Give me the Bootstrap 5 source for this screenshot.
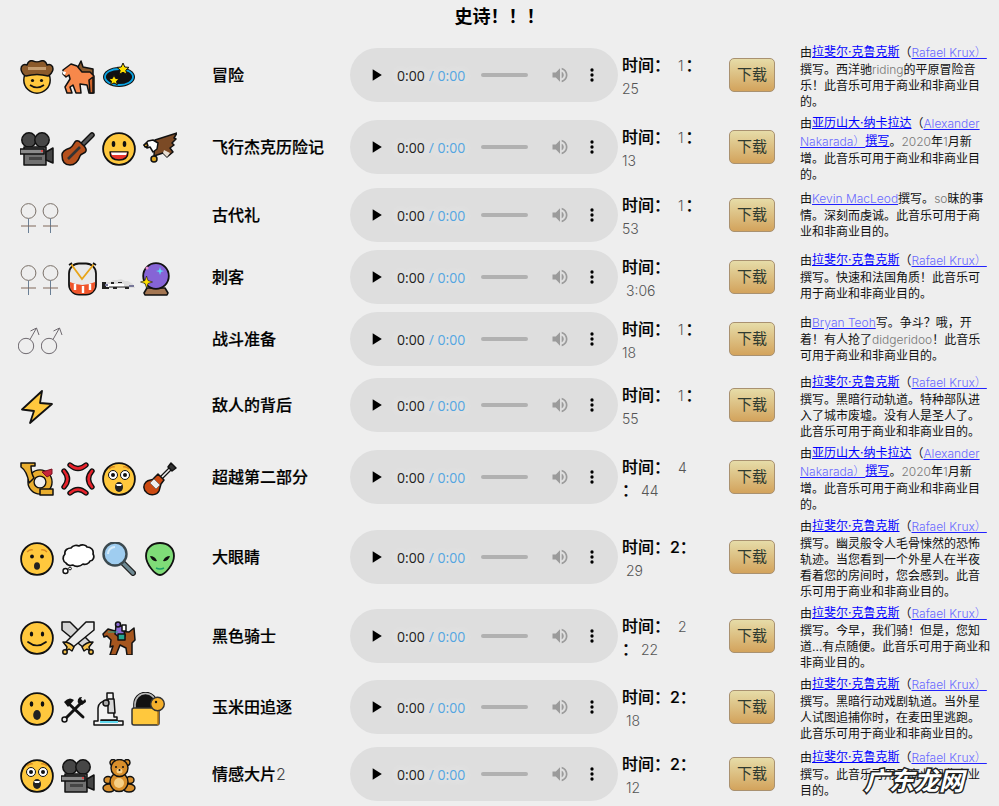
<!DOCTYPE html>
<html lang="zh-CN">
<head>
  <meta charset="UTF-8">
  <meta name="viewport" content="width=device-width, initial-scale=1.0">
  <title>史诗</title>
  <link href="https://cdn.jsdelivr.net/npm/bootstrap@5.3.2/dist/css/bootstrap.min.css" rel="stylesheet">
  <style>
    body { background: #eee; color: #000; font-family: Inter, "Noto Sans CJK SC", sans-serif; overflow: hidden; position: relative; height: 806px; }
    .sheet-title { font-size: 18px; font-weight: 700; line-height: 24px; padding-top: 5px; height: 40px; margin: 0; text-align: center; }
    .track { min-height: 62px; padding-left: 20px; }
    .track.h64 { min-height: 64px; }
    .track.h72 { min-height: 72px; }
    .track.h74 { min-height: 74px; }
    .emo-col { flex: 0 0 192px; height: 34px; margin-top: 3px; }
    .emo { width: 34px; height: 34px; margin-right: 7px; flex: none; }
    .emo.tight { margin-right: 3px; }
    .emo.sign { width: 17px; margin-right: 5px; }
    .emo.sign-m { width: 24px; margin-right: 1px; margin-left: -2px; }
    .emo.e26 { width: 27px; margin-right: 5px; }
    .emo.e30 { width: 31px; margin-right: 7px; }
    .emo-col svg { overflow: visible; }
    .track-name { flex: 0 0 138px; font-size: 16px; font-weight: 500; -webkit-text-stroke: .2px #000; }
    .track-name i { font-style: normal; font-weight: 300; color: #444; -webkit-text-stroke: 0; }
    .player { width: 268px; height: 54px; margin-right: 4px; flex: none; display: block; }
    .player::-webkit-media-controls-panel { background: #dedede; }
    .player::-webkit-media-controls-current-time-display { font-family: "Open Sans", sans-serif; }
    .player::-webkit-media-controls-time-remaining-display { font-family: "Open Sans", sans-serif; color: #3f9de2; }
    .time-col { flex: 0 0 107px; font-size: 16px; line-height: 23px; font-weight: 500; -webkit-text-stroke: .2px #000; padding-top: 3px; white-space: nowrap; }
    .time-num { font-size: 14px; font-weight: 300; color: #555; -webkit-text-stroke: 0; }
    .time-gap { margin-left: 8px; margin-right: 2px; }
    .time-ind { margin-left: 4px; }
    .time-ind2 { margin-left: 3px; }
    .get-btn { width: 46px; height: 34px; padding: 0; flex: none; margin-right: 25px; font-size: 15px; line-height: 32px; color: #2f3a30; background: linear-gradient(#e6dca8, #d3a35c); border: 1px solid #a99170; border-radius: 5px; }
    .blurb { font-size: 12px; line-height: 16px; white-space: nowrap; color: #111; }
    .blurb.low { padding-top: 4px; }
    .blurb a { line-height: 18px; color: #00f; position: relative; top: -1px; }
    .blurb a.lat { color: #6a6aff; text-decoration-color: #22f; top: 0; }
    .lat { font-weight: 300; }
    .grey { color: #777; }
    .mark-over { position: absolute; left: 864px; top: 761px; font-size: 25px; font-weight: 700; font-style: italic; line-height: 40px; color: #fff; -webkit-text-stroke: 3px #222; paint-order: stroke fill; pointer-events: none; }
  </style>
</head>
<body>
  <svg width="0" height="0" class="position-absolute">
    <defs>
      <symbol id="fc" viewBox="0 0 34 34"><circle cx="17" cy="17" r="15.9" fill="#ffc83d" stroke="#111" stroke-width="1.8"/></symbol>
      <symbol id="cowboy" viewBox="0 0 34 34"><g stroke="#111" stroke-width="1.5" stroke-linejoin="round"><circle cx="17" cy="20" r="13.2" fill="#ffc83d"/><path d="M1 9c0-4 3-5 6-4 1-3 3-5 6-4 2 1 6 1 8 0 3-1 5 1 6 4 3-1 6 0 6 4 0 3-3 6-5 7-7-2-15-2-22 0C4 16 1 12 1 9z" fill="#8b5a2b"/><path d="M8 7h18v3H8z" fill="#c49c6f" stroke="none"/></g><circle cx="12.500" cy="20.500" r="1.600" fill="#111"/><circle cx="21.500" cy="20.500" r="1.600" fill="#111"/><path d="M10 25q7 5 14 0" fill="none" stroke="#111" stroke-width="1.600"/></symbol>
      <symbol id="horse" viewBox="0 0 34 34"><g stroke="#111" stroke-width="1.500" stroke-linejoin="round"><path d="M17 7l3-6 2 6 10 2v7l-15-3z" fill="#8a5a2e"/><path d="M2 10l8-6 6 2 5 6h8l4 4v17h-5l-2-8-7-1 1 9h-5l-3-8-3 2 2 6H6l-2-6 5-8-1-4-3 2-3-3z" fill="#f7884b"/><path d="M28 20l1 13h3V17z" fill="#d0652c"/></g><path d="M1 11l4 1-1 3-2-1z" fill="#fff"/></symbol>
      <symbol id="galaxy" viewBox="0 0 34 34"><ellipse cx="17" cy="17" rx="16" ry="10" fill="#111"/><ellipse cx="17" cy="17" rx="14" ry="8" fill="#111" stroke="#0ba5e6" stroke-width="1.800"/><path d="M21 3l1.800 4 4.200.4-3.200 2.800 1 4.200-3.800-2.200-3.800 2.200 1-4.200-3.200-2.800 4.200-.4z" fill="#ffe000" stroke="#111"/><path d="M12 15l1.600 3.400 3.600.4-2.700 2.400.8 3.600-3.300-1.900-3.300 1.900.8-3.600-2.700-2.400 3.600-.4z" fill="#ffe000" stroke="#111"/></symbol>
      <symbol id="camera" viewBox="0 0 34 34"><g stroke="#111" stroke-width="1.500" stroke-linejoin="round"><circle cx="9" cy="8" r="7.200" fill="#464646"/><circle cx="22" cy="8" r="7.200" fill="#464646"/><path d="M4 15h22v18H4z" fill="#717171"/><path d="M26 20l7-4v15l-7-3z" fill="#444"/><path d="M0 17h24v5H0z" fill="#8a8a8a"/><path d="M9 25h13v3H9z" fill="#454545" stroke="none"/></g><circle cx="22" cy="19" r="1" fill="#e33"/></symbol>
      <symbol id="violin" viewBox="0 0 34 34"><path d="M15 19L31 3" stroke="#111" stroke-width="5.500" stroke-linecap="round"/><path d="M15 19L31 3" stroke="#555" stroke-width="2.800" stroke-linecap="round"/><path d="M15 9c3-1 4 1 6 3s5 4 4 7-5 2-6 5-3 9-10 9-8-6-8-10 5-6 8-7 4-6 6-7z" fill="#b5501c" stroke="#111" stroke-width="1.500" stroke-linejoin="round"/><path d="M7 27l12-12" stroke="#333" stroke-width="2.600"/></symbol>
      <symbol id="grin" viewBox="0 0 34 34"><use href="#fc"/><ellipse cx="11.500" cy="12" rx="1.800" ry="3" fill="#111"/><ellipse cx="22.500" cy="12" rx="1.800" ry="3" fill="#111"/><path d="M8 20h18q0 8-9 8t-9-8z" fill="#e8352c" stroke="#111" stroke-width="1.400" stroke-linejoin="round"/><path d="M9 20.500h16l-1 2.500H10z" fill="#fff"/></symbol>
      <symbol id="eagle" viewBox="0 0 34 34"><g stroke="#111" stroke-width="1.500" stroke-linejoin="round"><path d="M12 8L34 1l-3 5 2 1-4 4 2 2-4 3 3 4-6 5-4-4-9 3z" fill="#7b4a25"/><path d="M1 13l4-4 5-1 5 3-1 6-4 3-3-5-3 1z" fill="#fff"/><path d="M1 13l3-2 1 3-3 1z" fill="#f2b22a"/><circle cx="11" cy="27" r="3" fill="#d9a21f"/><path d="M21 18l6 3-3 4-4-4z" fill="#e7ddd0" stroke="none"/></g></symbol>
      <symbol id="female" viewBox="0 0 17 34"><g fill="none" stroke-width="1"><circle cx="8.500" cy="11" r="7.400" stroke="#7a7068"/><path d="M8.500 18.500V33" stroke="#6a7f95"/><path d="M1 26h15" stroke="#80695a"/></g></symbol>
      <symbol id="male" viewBox="0 0 24 34"><g fill="none" stroke-width="1" stroke="#6f6a70"><circle cx="8" cy="22" r="7.700"/><path d="M12 15.500L18.500 4M12.500 7l6-3 2.500 7"/></g></symbol>
      <symbol id="drum" viewBox="0 0 34 34"><rect x="5" y="1.500" width="27" height="31" rx="10" fill="#e8e8e8" stroke="#111" stroke-width="1.800"/><path d="M6 20q12 6 25 0v3q0 9-10 9h-5Q6 32 6 23z" fill="#f0552b"/><path d="M11 22v6M19 24v7M26 22v6" stroke="#fff" stroke-width="2.400"/><path d="M7 2l11 15L30 2" fill="none" stroke="#e8a417" stroke-width="1.800"/><path d="M5 3l3-2M32 3l-3-2" stroke="#111" stroke-width="1.600"/></symbol>
      <symbol id="car" viewBox="0 0 34 34"><path d="M1 22h4v-2h4l3-2h4l4-1 4 2h3l5 3v2l2 1v1H1z" fill="#ddd"/><path d="M1 20h4v7H1zM5 25h3v2H5zM12 25h4v2h-4zM24 25h4v2h-4zM10 20h3v2h-3zM17 20h4v1h-4z" fill="#222"/><path d="M7 22h16v3H7z" fill="#fff"/><path d="M28 23h5v2h-5zM4 22h3v2H4z" fill="#779"/><path d="M8 25h20" stroke="#222"/></symbol>
      <symbol id="ball" viewBox="0 0 34 34"><path d="M9 26h18l3 5-1 2H7l-1-2z" fill="#a47652" stroke="#111" stroke-width="1.600" stroke-linejoin="round"/><circle cx="18" cy="14" r="12.800" fill="#8664d6" stroke="#111" stroke-width="1.800"/><path d="M22 5l1 3.200L26 9l-3 1-1 3-1-3-3-1 3-.8z" fill="#5ed7f5"/><path d="M8.500 14l1.500 4.500 4.500 1.500-4.500 1.500-1.500 4.500-1.500-4.500-4.500-1.500 4.500-1.500z" fill="#ffe000" stroke="#111" stroke-width=".6"/><circle cx="9" cy="6" r="1.500" fill="#e88ed0"/></symbol>
      <symbol id="zap" viewBox="0 0 34 34"><path d="M22 1L2 19.500l12 1.500-4 12 22-19-12-1z" fill="#ffc83d" stroke="#111" stroke-width="1.800" stroke-linejoin="round"/></symbol>
      <symbol id="horn" viewBox="0 0 34 34"><circle cx="20" cy="20" r="9" fill="none" stroke="#111" stroke-width="7.500"/><circle cx="20" cy="20" r="9" fill="none" stroke="#e9ae2f" stroke-width="4.800"/><g stroke="#111" stroke-width="1.500" stroke-linejoin="round"><path d="M1 1h14v3h-4q0 7 3 12l-5 5Q7 9 1 5z" fill="#e9ae2f"/><path d="M20 27h13v6H20z" fill="#e9ae2f"/></g><path d="M22 10l10-3v5l-5 3z" fill="#c6243a" stroke="#7a1020"/></symbol>
      <symbol id="anger" viewBox="0 0 34 34"><g fill="none" stroke-linecap="round"><path d="M9 3q8 7 16 0M9 31q8-7 16 0M3 9q7 8 0 16M31 9q-7 8 0 16" stroke="#111" stroke-width="5.400"/><path d="M9 3q8 7 16 0M9 31q8-7 16 0M3 9q7 8 0 16M31 9q-7 8 0 16" stroke="#e8232c" stroke-width="2.600"/></g></symbol>
      <symbol id="shock" viewBox="0 0 34 34"><use href="#fc"/><path d="M7 7q3-3 6-2M27 7q-3-3-6-2" fill="none" stroke="#d98a1f" stroke-width="1.300"/><circle cx="11" cy="13" r="4.500" fill="#fff" stroke="#111"/><circle cx="23" cy="13" r="4.500" fill="#fff" stroke="#111"/><circle cx="11" cy="13" r="2" fill="#111"/><circle cx="23" cy="13" r="2" fill="#111"/><ellipse cx="17" cy="25" rx="4" ry="5" fill="#222"/><path d="M14 22h6l-1 2h-4z" fill="#fff"/></symbol>
      <symbol id="guitar" viewBox="0 0 34 34"><path d="M15 19L29 5" stroke="#111" stroke-width="4"/><path d="M15 19L29 5" stroke="#eee" stroke-width="1.600"/><path d="M28 1l5 5-4 3-4-4z" fill="#333" stroke="#111" stroke-width="1.500" stroke-linejoin="round"/><path d="M15 12l6 6-3 4-2 7c-2 4-8 5-12 2s-4-8-1-11 7-1 8-4z" fill="#cc4a12" stroke="#111" stroke-width="1.500" stroke-linejoin="round"/><path d="M11 17l6 6-4 4-6-6z" fill="#eee" stroke="#555" stroke-width=".6"/></symbol>
      <symbol id="hush" viewBox="0 0 34 34"><use href="#fc"/><path d="M7 10q3-3 6-2M27 10q-3-3-6-2" fill="none" stroke="#d98a1f" stroke-width="1.300"/><circle cx="12" cy="14.500" r="1.900" fill="#111"/><circle cx="22" cy="14.500" r="1.900" fill="#111"/><ellipse cx="17" cy="24" rx="3" ry="3.800" fill="#222"/></symbol>
      <symbol id="cloud" viewBox="0 0 34 34"><path d="M4 12c-1-4 3-6 6-6 2-3 6-3 8-2 3-2 7-1 8 1 4 0 7 3 6 7 2 3 0 7-3 7-1 3-5 4-7 3-3 3-8 3-10 1-3 1-6 0-7-2-3-1-4-6-1-9z" fill="#fff" stroke="#111" stroke-width="1.700" stroke-linejoin="round"/><circle cx="4.500" cy="29" r="2.500" fill="#fff" stroke="#111" stroke-width="1.400"/><circle cx="9" cy="26.500" r="1.400" fill="#fff" stroke="#111" stroke-width="1"/></symbol>
      <symbol id="lens" viewBox="0 0 34 34"><path d="M21 21l10 10" stroke="#222" stroke-width="6" stroke-linecap="round"/><path d="M21 21l10 10" stroke="#6f8a94" stroke-width="3.200" stroke-linecap="round"/><circle cx="13" cy="12" r="11.500" fill="#9fcdf0" stroke="#3c4a50" stroke-width="2.400"/><path d="M6 12a7 7 0 0 1 7-7" fill="none" stroke="#d6ecfb" stroke-width="2"/></symbol>
      <symbol id="alien" viewBox="0 0 34 34"><path d="M17 1c8 0 14 5 14 13 0 8-9 19-14 19S3 22 3 14C3 6 9 1 17 1z" fill="#7fdc78" stroke="#111" stroke-width="1.800"/><path d="M7 14q5 0 7 5-5 1-7-5zM27 14q-5 0-7 5 5 1 7-5z" fill="#111"/><path d="M13 26q4 2 8 0" fill="none" stroke="#1c9f6a" stroke-width="1.500"/></symbol>
      <symbol id="smile" viewBox="0 0 34 34"><use href="#fc"/><ellipse cx="11.500" cy="13" rx="1.700" ry="2.600" fill="#111"/><ellipse cx="22.500" cy="13" rx="1.700" ry="2.600" fill="#111"/><path d="M8 21q9 7 18 0" fill="none" stroke="#111" stroke-width="1.700" stroke-linecap="round"/></symbol>
      <symbol id="swords" viewBox="0 0 34 34"><g stroke="#111" stroke-width="1.500" stroke-linejoin="round"><path d="M1 1h8l20 20-6 6L1 9z" fill="#d4d4d4"/><path d="M33 1h-8L5 21l6 6L33 9z" fill="#ececec"/><path d="M2 21q7 0 11 5l-2 4-3-2-3 2 1-4zM32 21q-7 0-11 5l2 4 3-2 3 2-1-4z" fill="#f4c04a"/><circle cx="4" cy="31" r="2.200" fill="#f4c04a"/><circle cx="30" cy="31" r="2.200" fill="#f4c04a"/></g></symbol>
      <symbol id="racer" viewBox="0 0 34 34"><g stroke="#111" stroke-width="1.500" stroke-linejoin="round"><path d="M1 13l5-5 7 2 14 1 5-4 1 12-3 3v12h-5l-1-7-6-3-4 10H8l3-9-3 1 1-7-4-4-3 1z" fill="#a5561f"/><path d="M14 5h7l2 10-5 2-5-4z" fill="#8c6bd4"/><circle cx="16" cy="3.500" r="2.500" fill="#8c6bd4"/><path d="M20 4h4v6h-4z" fill="#fff"/><path d="M16 13h7v6h-7z" fill="#25a88f"/></g><path d="M6 11h10" stroke="#25a88f"/></symbol>
      <symbol id="ooh" viewBox="0 0 34 34"><use href="#fc"/><ellipse cx="11.500" cy="12" rx="1.800" ry="2.700" fill="#111"/><ellipse cx="22.500" cy="12" rx="1.800" ry="2.700" fill="#111"/><ellipse cx="17" cy="23" rx="3.800" ry="5" fill="#222"/></symbol>
      <symbol id="tools" viewBox="0 0 27 34"><g fill="none" stroke-linecap="round"><path d="M7 11l15 14" stroke="#111" stroke-width="3"/><path d="M4 27L20 11" stroke="#111" stroke-width="3"/><path d="M3 10q5-6 10-2l-6 7z" fill="#111"/><path d="M21 5a4 4 0 0 0-3 7l3 1 4-3a4 4 0 0 0-1-3l-2 2-2-2z" fill="#111"/></g><circle cx="3.500" cy="27.500" r="2.500" fill="#eee" stroke="#111" stroke-width="1.500"/></symbol>
      <symbol id="micro" viewBox="0 0 31 34"><g stroke="#111" stroke-width="1.500" stroke-linejoin="round"><path d="M1 33v-4h4V16c0-4 4-7 9-8v-7h6l1 24h3v3H8v1h22v4z" fill="#f2f2f2"/><path d="M15 7h6l1 14h-7z" fill="#d9d9d9"/><circle cx="13" cy="11" r="3" fill="#aaa"/><path d="M7 29h18v2H7z" fill="#5fd8ee" stroke="none"/></g></symbol>
      <symbol id="lock" viewBox="0 0 34 34"><path d="M5 18V12a9.500 9.500 0 0 1 19 0v6z" fill="#111"/><path d="M4 18V12a10.500 10.500 0 0 1 21 0" fill="none" stroke="#111" stroke-width="3.600"/><path d="M4 18V12a10.500 10.500 0 0 1 21 0" fill="none" stroke="#bbb" stroke-width="1.600"/><rect x="1" y="16" width="27" height="17" rx="2" fill="#ffc83d" stroke="#333" stroke-width="1.500"/><path d="M27 16v17" stroke="#b97a12" stroke-width="1.500"/><circle cx="26.500" cy="12" r="6.800" fill="#f5b02c" stroke="#333" stroke-width="1.400"/><circle cx="25" cy="10" r="1.200" fill="#111"/></symbol>
      <symbol id="bear" viewBox="0 0 34 34"><g stroke="#111" stroke-width="1.400" fill="#d98f2b"><circle cx="11" cy="3.500" r="3"/><circle cx="25" cy="3.500" r="3"/><ellipse cx="6" cy="21" rx="4" ry="3.500"/><ellipse cx="28" cy="21" rx="4" ry="3.500"/><ellipse cx="7" cy="29" rx="6" ry="4"/><ellipse cx="27" cy="29" rx="6" ry="4"/><ellipse cx="17" cy="23" rx="9" ry="9.500"/><circle cx="17.500" cy="9" r="8.500"/></g><ellipse cx="17" cy="24" rx="5" ry="5" fill="#f6cf86"/><ellipse cx="17.500" cy="12" rx="3" ry="2.500" fill="#f6cf86"/><circle cx="14" cy="8" r="1" fill="#111"/><circle cx="21" cy="8" r="1" fill="#111"/><circle cx="17.500" cy="11" r="1" fill="#111"/></symbol>
    </defs>
  </svg>

  <h1 class="sheet-title">史诗！！！</h1>

  <div id="list"></div>
  <div class="mark-over">广东龙网</div>

  <script>
    const rafael = '由<a href="#">拉斐尔·克鲁克斯</a>（<a href="#" class="lat">Rafael Krux）</a><br>';
    const alex = '由<a href="#">亚历山大·纳卡拉达</a>（<a href="#" class="lat">Alexander</a><br><a href="#" class="lat">Nakarada）</a><a href="#">撰写</a>。<span class="lat grey">2020</span>年<span class="lat grey">1</span>月新<br>增。此音乐可用于商业和非商业目<br>的。';
    const num = (t, c = "") => `<span class="time-num ${c}">${t}</span>`;

    const tracks = [
      { e: ["cowboy", "horse", "galaxy"], n: "冒险", low: 1, t: `时间：${num("1", "time-gap")}：<br>${num("25")}`,
        d: rafael + '撰写。西洋驰<span class="lat grey">riding</span>的平原冒险音<br>乐！此音乐可用于商业和非商业目<br>的。' },
      { e: ["camera", "violin", "grin", "eagle"], n: "飞行杰克历险记", h: "h74", low: 1, t: `时间：${num("1", "time-gap")}：<br>${num("13")}`, d: alex },
      { e: ["female:sign", "female:sign"], n: "古代礼", t: `时间：${num("1", "time-gap")}：<br>${num("53")}`,
        d: '由<a href="#" class="lat">Kevin MacLeod</a>撰写。<span class="lat grey">so</span>昧的事<br>情。深刻而虔诚。此音乐可用于商<br>业和非商业目的。' },
      { e: ["female:sign", "female:sign", "drum:tight", "car:tight", "ball"], n: "刺客", t: `时间：<br>${num("3:06", "time-ind")}`,
        d: rafael + '撰写。快速和法国角质！此音乐可<br>用于商业和非商业目的。' },
      { e: ["male:sign-m", "male:sign-m"], n: "战斗准备", t: `时间：${num("1", "time-gap")}：<br>${num("18")}`,
        d: '由<a href="#" class="lat">Bryan Teoh</a>写。争斗？哦，开<br>着！有人抢了<span class="lat grey">didgeridoo</span>！此音乐<br>可用于商业和非商业目的。' },
      { e: ["zap"], n: "敌人的背后", low: 1, t: `时间：${num("1", "time-gap")}：<br>${num("55")}`,
        d: rafael + '撰写。黑暗行动轨道。特种部队进<br>入了城市废墟。没有人是圣人了。<br>此音乐可用于商业和非商业目的。' },
      { e: ["horn", "anger", "shock", "guitar"], n: "超越第二部分", h: "h74", low: 1, t: `时间：${num("4", "time-gap")}<br>：${num("44", "time-ind2")}`, d: alex },
      { e: ["hush", "cloud", "lens", "alien"], n: "大眼睛", low: 1, t: `时间：2：<br>${num("29", "time-ind")}`,
        d: rafael + '撰写。幽灵般令人毛骨悚然的恐怖<br>轨迹。当您看到一个外星人在半夜<br>看着您的房间时，您会感到。此音<br>乐可用于商业和非商业目的。' },
      { e: ["smile", "swords", "racer"], n: "黑色骑士", h: "h72", low: 1, t: `时间：${num("2", "time-gap")}<br>：${num("22", "time-ind2")}`,
        d: rafael + '撰写。今早，我们骑！但是，您知<br>道...有点随便。此音乐可用于商业和<br>非商业目的。' },
      { e: ["ooh", "tools:e26", "micro:e30", "lock"], n: "玉米田追逐", low: 1, t: `时间：2：<br>${num("18", "time-ind")}`,
        d: rafael + '撰写。黑暗行动戏剧轨道。当外星<br>人试图追捕你时，在麦田里逃跑。<br>此音乐可用于商业和非商业目的。' },
      { e: ["shock", "camera", "bear"], n: "情感大片<i>2</i>", h: "h64", t: `时间：2：<br>${num("12", "time-ind")}`,
        d: rafael + '撰写。此音乐可用于商业和非商业<br>目的。' }
    ];

    document.getElementById("list").innerHTML = tracks.map(tr => `
      <div class="track d-flex align-items-center ${tr.h || ""}">
        <div class="emo-col d-flex align-items-center">
          ${tr.e.map(x => {
            const [id, cls = ""] = x.split(":");
            return `<svg class="emo ${cls}"><use href="#${id}"/></svg>`;
          }).join("")}
        </div>
        <div class="track-name">${tr.n}</div>
        <audio class="player" controls preload="none" src="track.mp3"></audio>
        <div class="time-col">${tr.t}</div>
        <button class="btn get-btn" type="button">下载</button>
        <div class="blurb ${tr.low ? "low" : ""}">${tr.d}</div>
      </div>`).join("");
  </script>
  <script src="https://cdn.jsdelivr.net/npm/bootstrap@5.3.2/dist/js/bootstrap.bundle.min.js"></script>
</body>
</html>
